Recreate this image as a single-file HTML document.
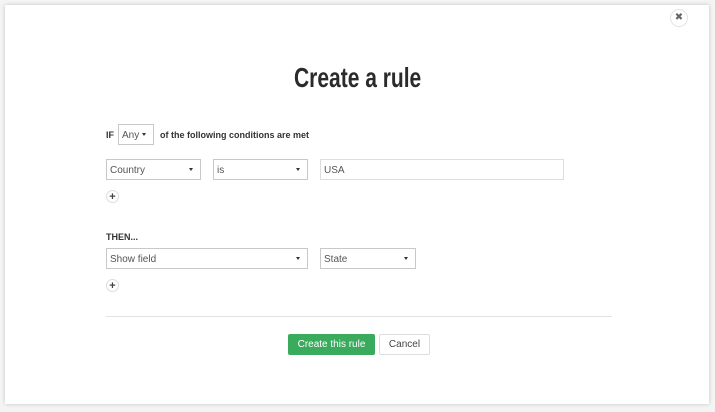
<!DOCTYPE html>
<html><head><style>
body{margin:0;width:715px;height:412px;background:#f4f4f4;font-family:"Liberation Sans",sans-serif;position:relative;overflow:hidden}
.m{position:absolute;left:5px;top:5px;width:704px;height:399px;background:#fff;box-shadow:0 0 4px rgba(0,0,0,.2)}
.a{position:absolute}
.t{left:0;width:715px;top:62px;text-align:center;font:bold 28px "Liberation Sans",sans-serif;color:#2b2b2b;transform:scaleX(0.75);transform-origin:358px 0}
.sel,.inp{position:absolute;height:21px;border:1px solid #c8c8c8;box-sizing:border-box;font-size:10px;color:#555;padding-left:3px;padding-top:1px;background:#fff;display:flex;align-items:center}
.sel:after{content:"";position:absolute;right:7px;top:8px;border-left:2.5px solid transparent;border-right:2.5px solid transparent;border-top:3.5px solid #333}
.lbl{font-size:9px;font-weight:bold;color:#333}
.plus{position:absolute;width:13px;height:13px;border:1px solid #ddd;border-radius:50%;box-sizing:border-box;text-align:center;font:bold 11px/12px "Liberation Sans",sans-serif;color:#444}
</style></head><body>
<div class="m"></div>
<div class="a" style="left:670px;top:9px;width:18px;height:18px;border:1px solid #e4e4e4;border-radius:50%;box-sizing:border-box;text-align:center;font:bold 10px/16px 'DejaVu Sans',sans-serif;color:#666">✖</div>
<div class="a t">Create a rule</div>
<div class="a lbl" style="left:106px;top:130px">IF</div>
<div class="sel" style="left:118px;top:124px;width:36px;height:21px">Any</div>
<div class="a lbl" style="left:160px;top:130px">of the following conditions are met</div>
<div class="sel" style="left:106px;top:159px;width:95px">Country</div>
<div class="sel" style="left:213px;top:159px;width:95px">is</div>
<div class="inp" style="left:320px;top:159px;width:244px;border-color:#ddd">USA</div>
<div class="plus" style="left:106px;top:190px">+</div>
<div class="a lbl" style="left:106px;top:232px">THEN...</div>
<div class="sel" style="left:106px;top:248px;width:202px">Show field</div>
<div class="sel" style="left:320px;top:248px;width:96px">State</div>
<div class="plus" style="left:106px;top:279px">+</div>
<div class="a" style="left:106px;top:316px;width:506px;height:1px;background:#e2e2e2"></div>
<div class="a" style="left:288px;top:334px;width:87px;height:21px;background:#3aaa5c;border-radius:2px;color:#fff;font-size:10px;line-height:21px;text-align:center">Create this rule</div>
<div class="a" style="left:379px;top:334px;width:51px;height:21px;border:1px solid #ddd;box-sizing:border-box;border-radius:2px;color:#444;font-size:10px;line-height:19px;text-align:center">Cancel</div>
</body></html>
